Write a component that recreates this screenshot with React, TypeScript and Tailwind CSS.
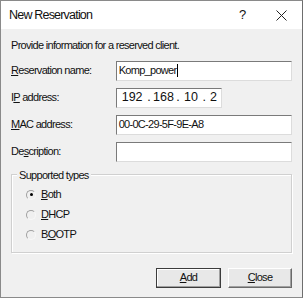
import React from 'react'

const U = ({ children }: { children: React.ReactNode }) => (
  <span className="underline underline-offset-1">{children}</span>
)

const Field = ({ label, children }: { label: React.ReactNode; children: React.ReactNode }) => (
  <div className="flex items-center h-[20px]">
    <div className="w-[105px]">{label}</div>
    {children}
  </div>
)

const Radio = ({ checked, label }: { checked?: boolean; label: React.ReactNode }) => (
  <div className="flex items-center h-[14px]">
    <div className="relative w-[10px] h-[10px] rounded-full border border-t-[#a0a0a0] border-l-[#a0a0a0] border-r-[#f8f8f8] border-b-[#f8f8f8] bg-[#f0f0f0]">
      {checked && <div className="absolute left-[2.5px] top-[2.5px] w-[3px] h-[3px] rounded-full bg-black" />}
    </div>
    <div className="ml-[5px]">{label}</div>
  </div>
)

export default function App() {
  return (
    <div
      className="w-[303px] h-[298px] border border-[#8a8a8a] border-r-[#6e6e6e] bg-[#f0f0f0] text-[11px] tracking-[-0.7px] text-[#111] flex flex-col"
      style={{ fontFamily: '"Liberation Sans", Arial, sans-serif' }}
    >
      <div className="h-[28px] bg-white flex items-center pl-[8px] pr-[13px] text-[12.5px] tracking-[-0.8px]">
        <div className="flex-1">New Reservation</div>
        <div className="w-[40px] text-[13px] pl-[3px]">?</div>
        <svg width="11" height="11" viewBox="0 0 11 11" className="mr-[2px]">
          <path d="M0.5 0.5L10.5 10.5M10.5 0.5L0.5 10.5" stroke="#222" strokeWidth="1" />
        </svg>
      </div>

      <div className="flex-1 px-[10px] pt-[8px]">
        <div>Provide information for a reserved client.</div>

        <div className="mt-[7px] flex flex-col gap-[7px]">
          <Field label={<><U>R</U>eservation name:</>}>
            <div className="w-[177px] h-[20px] bg-white border border-[#7a7a7a] border-r-[#dcdcdc] border-b-[#dcdcdc] flex items-center pl-[2px]">
              Komp_power<span className="inline-block w-px h-[13px] bg-black ml-[1px]" />
            </div>
          </Field>
          <Field label={<>I<U>P</U> address:</>}>
            <div className="w-[106px] h-[20px] bg-white border border-[#7a7a7a] border-r-[#dcdcdc] border-b-[#dcdcdc] flex items-center text-[12.5px] tracking-normal">
              <span className="w-[32px] text-center">192</span>
              <span>.</span>
              <span className="w-[27px] text-center">168</span>
              <span>.</span>
              <span className="w-[24px] text-center">10</span>
              <span>.</span>
              <span className="w-[16px] text-center">2</span>
            </div>
          </Field>
          <Field label={<><U>M</U>AC address:</>}>
            <div className="w-[177px] h-[20px] bg-white border border-[#7a7a7a] border-r-[#dcdcdc] border-b-[#dcdcdc] flex items-center pl-[2px]">
              00-0C-29-5F-9E-A8
            </div>
          </Field>
          <Field label={<>De<U>s</U>cription:</>}>
            <div className="w-[177px] h-[20px] bg-white border border-[#7a7a7a] border-r-[#dcdcdc] border-b-[#dcdcdc]" />
          </Field>
        </div>

        <div className="relative mt-[12px] h-[79px] border border-[#d0d0d0] shadow-[inset_1px_1px_0_#ffffff,1px_1px_0_#ffffff]">
          <div className="absolute -top-[8px] left-[5px] px-[2px] bg-[#f0f0f0]">Supported types</div>
          <div className="pl-[14px] pt-[13px] flex flex-col gap-[6px]">
            <Radio checked label={<><U>B</U>oth</>} />
            <Radio label={<><U>D</U>HCP</>} />
            <Radio label={<>B<U>O</U>OTP</>} />
          </div>
        </div>

        <div className="mt-[15px] flex justify-end gap-[7px]">
          <button className="w-[65px] h-[20px] bg-[#e8e8e8] border border-[#3c3c3c] shadow-[inset_-1px_-1px_0_#a0a0a0,inset_1px_1px_0_#ffffff]">
            <U>A</U>dd
          </button>
          <button className="w-[64px] h-[20px] bg-[#e8e8e8] border border-[#ffffff] border-r-[#6a6a6a] border-b-[#6a6a6a] shadow-[inset_-1px_-1px_0_#a0a0a0]">
            <U>C</U>lose
          </button>
        </div>
      </div>
    </div>
  )
}
